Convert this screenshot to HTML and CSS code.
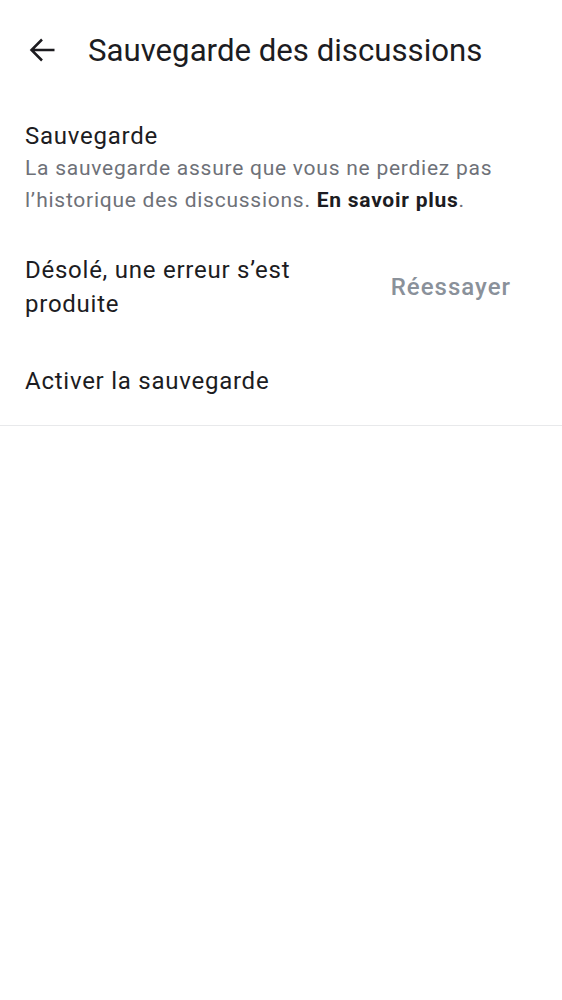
FILE: index.html
```html
<!DOCTYPE html>
<html lang="fr">
<head>
<meta charset="utf-8">
<link rel="stylesheet" href="styles.css">
</head>
<body>
<header class="bar">
  <svg class="back" viewBox="0 0 26 26" width="26" height="26"><path d="M25.5 13H3.5M13 2.5L2.5 13 13 23.5" fill="none" stroke="#1c1b1f" stroke-width="2.5"/></svg>
  <h1 class="title">Sauvegarde des discussions</h1>
</header>
<section class="block">
  <div class="intro">
    <div class="label">Sauvegarde</div>
    <div class="desc">La sauvegarde assure que vous ne perdiez pas l’historique des discussions. <b>En savoir plus</b>.</div>
  </div>
  <div class="row">
    <div class="err">Désolé, une erreur s’est produite</div>
    <div class="retry">Réessayer</div>
  </div>
  <div class="toggle">Activer la sauvegarde</div>
</section>
</body>
</html>
```
FILE: styles.css
```css
* { box-sizing: border-box; }
body { margin: 0; background: #fff; font-family: Roboto, "Noto Sans", sans-serif; color: #1c1c22; }
.bar { display: flex; align-items: center; height: 100px; padding-left: 29px; }
.back { flex: none; }
.title { margin: 0 0 0 33px; font-size: 31.2px; font-weight: 400; letter-spacing: 0; }
.block { border-bottom: 1px solid #e8e9eb; padding-bottom: 27px; }
.intro { padding: 20px 40px 0 25px; }
.label { font-size: 24px; line-height: 32px; letter-spacing: 0.75px; }
.desc { font-size: 21px; line-height: 32px; color: #6e7178; letter-spacing: 0.75px; }
.desc b { color: #1c1c22; font-weight: 700; }
.row { display: flex; align-items: center; padding: 37px 51px 0 25px; justify-content: space-between; }
.err { font-size: 24px; line-height: 34px; width: 300px; letter-spacing: 0.75px; }
.retry { font-size: 24px; font-weight: 500; color: #8a919a; letter-spacing: 1px; }
.toggle { font-size: 24px; line-height: 34px; padding: 43px 25px 0; letter-spacing: 0.75px; }
```
